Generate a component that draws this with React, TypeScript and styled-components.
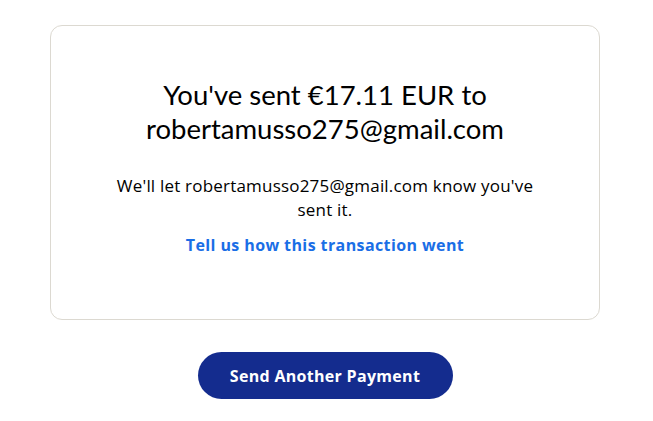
import { createGlobalStyle } from "styled-components";
import styled from "styled-components";

const GlobalStyle = createGlobalStyle`
  html, body {
    margin: 0;
    padding: 0;
    background: #ffffff;
  }
  body {
    font-family: "Open Sans", Lato, "Liberation Sans", sans-serif;
    color: #001435;
  }
`;

export default function App() {
  return (
    <Scoped>
      <GlobalStyle />
      <Card>
        <Title>
          You've sent €17.11 EUR to
          <br />
          robertamusso275@gmail.com
        </Title>
        <Message>We'll let robertamusso275@gmail.com know you've sent it.</Message>
        <FeedbackLink href="#">Tell us how this transaction went</FeedbackLink>
      </Card>
      <Actions>
        <PrimaryButton type="button">Send Another Payment</PrimaryButton>
      </Actions>
    </Scoped>
  );
}

const Scoped = styled.div`
  width: 550px;
  margin-left: 50px;
  padding-top: 25px;
`;

const Card = styled.div`
  box-sizing: border-box;
  height: 295px;
  border: 1px solid #dcd9d1;
  border-radius: 12px;
  padding: 52px 40px 0;
  display: flex;
  flex-direction: column;
  align-items: center;
  text-align: center;
`;

const Title = styled.h1`
  margin: 0;
  font-family: Lato, "Open Sans", sans-serif;
  font-size: 27.5px;
  font-weight: 400;
  line-height: 34px;
  color: #000000;
`;

const Message = styled.p`
  margin: 28px 0 0;
  width: 440px;
  font-size: 17px;
  letter-spacing: 0.2px;
  line-height: 24px;
  color: #000000;
`;

const FeedbackLink = styled.a`
  margin-top: 11px;
  font-size: 16px;
  font-weight: 700;
  letter-spacing: 0.4px;
  line-height: 24px;
  color: #1a6ee6;
  text-decoration: none;
`;

const Actions = styled.div`
  display: flex;
  justify-content: center;
  margin-top: 32px;
`;

const PrimaryButton = styled.button`
  width: 255px;
  height: 47px;
  border: none;
  border-radius: 24px;
  background: #142c8e;
  color: #ffffff;
  font-family: inherit;
  font-size: 16px;
  font-weight: 700;
  letter-spacing: 0.3px;
  cursor: pointer;
`;
